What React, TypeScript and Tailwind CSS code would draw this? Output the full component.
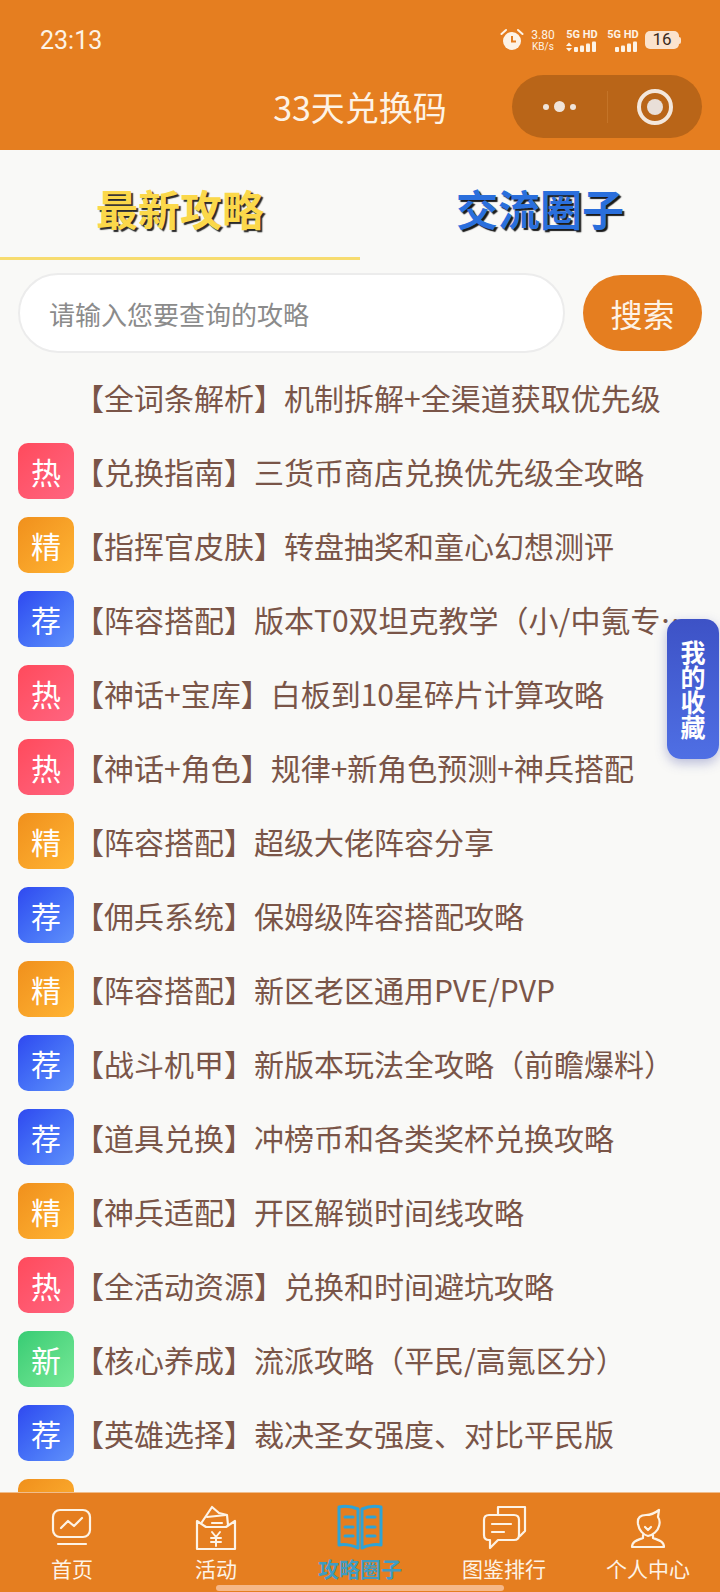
const rows = [
	{ tag: "", text: "【全词条解析】机制拆解+全渠道获取优先级" },
	{ tag: "热", text: "【兑换指南】三货币商店兑换优先级全攻略" },
	{ tag: "精", text: "【指挥官皮肤】转盘抽奖和童心幻想测评" },
	{ tag: "荐", text: "【阵容搭配】版本T0双坦克教学（小/中氪专用攻略）" },
	{ tag: "热", text: "【神话+宝库】白板到10星碎片计算攻略" },
	{ tag: "热", text: "【神话+角色】规律+新角色预测+神兵搭配" },
	{ tag: "精", text: "【阵容搭配】超级大佬阵容分享" },
	{ tag: "荐", text: "【佣兵系统】保姆级阵容搭配攻略" },
	{ tag: "精", text: "【阵容搭配】新区老区通用PVE/PVP" },
	{ tag: "荐", text: "【战斗机甲】新版本玩法全攻略（前瞻爆料）" },
	{ tag: "荐", text: "【道具兑换】冲榜币和各类奖杯兑换攻略" },
	{ tag: "精", text: "【神兵适配】开区解锁时间线攻略" },
	{ tag: "热", text: "【全活动资源】兑换和时间避坑攻略" },
	{ tag: "新", text: "【核心养成】流派攻略（平民/高氪区分）" },
	{ tag: "荐", text: "【英雄选择】裁决圣女强度、对比平民版" },
	{ tag: "精", text: "" },
];

const tagStyles: Record<string, string> = {
	热: "from-[#ff4a5c] to-[#ff6480]",
	精: "from-[#f0901c] to-[#ffb433]",
	荐: "from-[#3048f0] to-[#5f8ffb]",
	新: "from-[#36cc74] to-[#74e896]",
};

const SignalBars = ({ arrows }: { arrows?: boolean }) => (
	<svg width="34" height="12" viewBox="0 0 34 12" fill="#fdf3e6">
		{arrows && <path d="M1 5 L4 1.5 L7 5 Z M1 7 L7 7 L4 10.5 Z" />}
		<rect x="9" y="6" width="4" height="5" rx="1" />
		<rect x="15" y="4.5" width="4" height="6.5" rx="1" />
		<rect x="21" y="2.5" width="4" height="8.5" rx="1" />
		<rect x="27" y="0.5" width="4" height="10.5" rx="1" />
	</svg>
);

const StatusBar = () => (
	<div className="flex h-[75px] items-center justify-between pt-[5px] pr-[39px] pl-[40px] text-[#fdf3e6]">
		<span className="font-['Roboto',sans-serif] text-[25px] leading-none">23:13</span>
		<div className="flex items-center">
			<svg width="24" height="24" viewBox="0 0 24 24" fill="#fdf3e6">
				<circle cx="12" cy="13" r="9" />
				<path d="M12 8 V13.5 H16" fill="none" stroke="#e57e20" strokeWidth="2" />
				<path d="M1.5 6 L6 2 M22.5 6 L18 2" stroke="#fdf3e6" strokeWidth="2" strokeLinecap="round" />
			</svg>
			<div className="ml-[6px] flex w-[26px] flex-col items-center font-['Roboto',sans-serif] leading-none">
				<span className="text-[12px]">3.80</span>
				<span className="mt-[1px] text-[10px]">KB/s</span>
			</div>
			<div className="ml-[9px] flex w-[34px] flex-col items-center">
				<span className="font-['Roboto',sans-serif] text-[11px] leading-[13px] font-bold whitespace-nowrap">5G HD</span>
				<SignalBars arrows />
			</div>
			<div className="ml-[7px] flex w-[34px] flex-col items-center">
				<span className="font-['Roboto',sans-serif] text-[11px] leading-[13px] font-bold whitespace-nowrap">5G HD</span>
				<SignalBars />
			</div>
			<div className="ml-[5px] flex items-center">
				<div className="flex h-[18px] w-[34px] items-center justify-center rounded-[5px] bg-[#fbe3cd] font-['Roboto',sans-serif] text-[17px] text-[#3a2a20]">
					16
				</div>
				<div className="h-[7px] w-[2px] rounded-r-sm bg-[#fbe3cd]" />
			</div>
		</div>
	</div>
);

const NavBar = () => (
	<div className="relative flex h-[75px] items-start justify-center">
		<span className="mt-[12px] text-[34px] leading-[40px] text-[#fdf3e6]">33天兑换码</span>
		{/* mini program capsule */}
		<div className="absolute top-0 right-[18px] flex h-[63px] w-[190px] items-center rounded-full bg-[#b96518]">
			<div className="flex w-[95px] items-center justify-center gap-[5px]">
				<span className="h-[6px] w-[6px] rounded-full bg-[#f0e4da]" />
				<span className="h-[11px] w-[11px] rounded-full bg-[#f0e4da]" />
				<span className="h-[6px] w-[6px] rounded-full bg-[#f0e4da]" />
			</div>
			<div className="h-[32px] w-px bg-[#c47428]" />
			<div className="flex flex-1 items-center justify-center">
				<div className="flex h-[36px] w-[36px] items-center justify-center rounded-full border-[4px] border-[#f3e7dc]">
					<span className="h-[16px] w-[16px] rounded-full bg-[#e9dfd8]" />
				</div>
			</div>
		</div>
	</div>
);

const Tabs = () => (
	<div className="flex h-[110px]">
		<div className="flex w-[360px] items-start justify-center border-b-[3px] border-[#f7dc6f] pt-[32px]">
			<span className="text-[42px] leading-[52px] font-bold text-[#fbd84a] [text-shadow:2px_2px_1px_#2a2a2a]">
				最新攻略
			</span>
		</div>
		<div className="flex w-[360px] items-start justify-center pt-[32px]">
			<span className="text-[42px] leading-[52px] font-bold text-[#2a6fdc] [text-shadow:2px_2px_1px_#1a1a1a]">
				交流圈子
			</span>
		</div>
	</div>
);

const SearchBar = () => (
	<div className="mt-[13px] flex items-center pr-[18px] pl-[18px]">
		<div className="flex h-[80px] w-[547px] items-center rounded-full border-2 border-[#ececec] bg-white pl-[29px] text-[26px] text-[#8b8b8b]">
			请输入您要查询的攻略
		</div>
		<div className="ml-[18px] flex h-[76px] flex-1 items-center justify-center rounded-full bg-[#e57e20] text-[32px] text-[#fdf3e6]">
			搜索
		</div>
	</div>
);

const Row = ({ tag, text }: { tag: string; text: string }) => (
	<div className="flex h-[74px] shrink-0 items-center pl-[18px]">
		<div
			className={
				tag
					? `flex h-[56px] w-[56px] shrink-0 items-center justify-center rounded-[10px] bg-gradient-to-br text-[30px] text-white ${tagStyles[tag]}`
					: "h-[56px] w-[56px] shrink-0"
			}
		>
			{tag}
		</div>
		<div className="w-[620px] truncate text-[30px] leading-[46px] text-[#7a5548]">{text}</div>
	</div>
);

const TabItem = ({ label, active, children }: { label: string; active?: boolean; children: React.ReactNode }) => (
	<div className="flex flex-col items-center pt-[10px]">
		<div className="flex h-[48px] items-center justify-center">{children}</div>
		<span className={`mt-[3px] text-[21px] leading-[28px] ${active ? "font-bold text-[#3f9cc4]" : "text-[#fdf3e6]"}`}>
			{label}
		</span>
	</div>
);

const TabBar = () => (
	<div className="relative grid h-[100px] shrink-0 grid-cols-5 border-t border-[#f0bd8c] bg-[#e57e20]">
		<TabItem label="首页">
			<svg width="48" height="48" viewBox="0 0 48 48" fill="none" stroke="#fdf3e6" strokeWidth="2.2" strokeLinecap="round" strokeLinejoin="round">
				<rect x="5" y="7" width="37" height="27" rx="7" />
				<path d="M13 25 L20 18 L26 23 L34 15" />
				<path d="M10 41 H38" />
			</svg>
		</TabItem>
		<TabItem label="活动">
			<svg width="48" height="48" viewBox="0 0 48 48" fill="none" stroke="#fdf3e6" strokeWidth="2.2" strokeLinecap="round" strokeLinejoin="round">
				<path d="M10 19 L20 4 L27 10 L35 12 L36 22" />
				<path d="M15 14 L34 12 M20 20 H30" />
				<path d="M5 18 L14 24 H34 L43 18 V46 H5 Z" />
				<path d="M20 29 L24 34 L28 29 M19 35 H29 M19 39 H29 M24 34 V43" strokeWidth="2" />
			</svg>
		</TabItem>
		<TabItem label="攻略圈子" active>
			<svg width="48" height="48" viewBox="0 0 48 48" fill="none" stroke="#2fa3d6" strokeWidth="3" strokeLinecap="round" strokeLinejoin="round">
				<path d="M22 6 C15 3 8 3 3 4 V42 C8 41 15 42 22 45 Z" />
				<path d="M26 6 C33 3 40 3 45 4 V42 C40 41 33 42 26 45 Z" />
				<path d="M9 14 H17 M9 24 H17 M9 33 H17 M31 14 H39 M31 24 H39 M31 33 H39" />
			</svg>
		</TabItem>
		<TabItem label="图鉴排行">
			<svg width="48" height="48" viewBox="0 0 48 48" fill="none" stroke="#fdf3e6" strokeWidth="2.2" strokeLinecap="round" strokeLinejoin="round">
				<path d="M18 12 V4 H45 V28 L40 33" />
				<path d="M9 12 H34 Q39 12 39 17 V32 Q39 37 34 37 H18 L10 45 V37 H9 Q4 37 4 32 V17 Q4 12 9 12 Z" />
				<path d="M12 21 H31 M12 29 H24" />
			</svg>
		</TabItem>
		<TabItem label="个人中心">
			<svg width="48" height="48" viewBox="0 0 48 48" fill="none" stroke="#fdf3e6" strokeWidth="2.2" strokeLinecap="round" strokeLinejoin="round">
				<path d="M14 21 C13 14 17 12 22 12 C27 12 31 10 35 7 L34 14 C36 17 36 20 35 23 C34 28 29 32 24 33 C19 32 15 27 14 21 Z" />
				<path d="M19 32 V35 C14 37 8 38 8 44 H40 C40 38 34 37 29 35 V32" />
				<path d="M21 24 L24 27 L27 24" />
			</svg>
		</TabItem>
		{/* home indicator */}
		<div className="absolute top-[92px] left-[216px] h-[6px] w-[288px] rounded-full bg-[#f6b888]" />
	</div>
);

export default function App() {
	return (
		<div className="relative flex h-[1592px] w-[720px] flex-col overflow-hidden bg-[#f9f9f7] font-['Noto_Sans_CJK_SC','Noto_Sans',sans-serif]">
			<div className="h-[150px] shrink-0 bg-[#e57e20]">
				<StatusBar />
				<NavBar />
			</div>
			<Tabs />
			<SearchBar />
			<div className="mt-[7px] flex min-h-0 flex-1 flex-col overflow-hidden">
				{rows.map((row, i) => (
					<Row key={i} tag={row.tag} text={row.text} />
				))}
			</div>
			<TabBar />
			{/* floating favourites button */}
			<div className="absolute top-[619px] right-px flex h-[140px] w-[52px] items-center justify-center rounded-[14px] bg-gradient-to-b from-[#3d52c6] to-[#4f6fe4] text-center text-[25px] leading-[25px] font-bold text-white shadow-[0_4px_12px_rgba(60,70,160,0.35)]">
				<span className="w-[25px]">我的收藏</span>
			</div>
		</div>
	);
}
